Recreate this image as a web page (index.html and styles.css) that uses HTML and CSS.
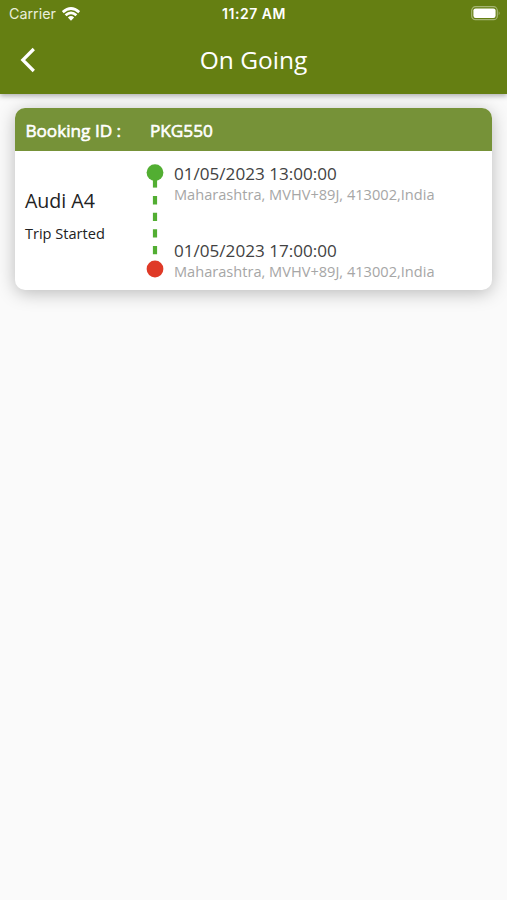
FILE: index.html
```
<!DOCTYPE html>
<html lang="en">
<head>
<meta charset="utf-8">
<title>On Going</title>
<link rel="stylesheet" href="styles.css">
</head>
<body>
<header class="header">
  <div class="status">
    <div class="carrier"><span>Carrier</span>
      <svg class="wifi" width="18" height="14" viewBox="0 0 18 14" fill="none" stroke="#fff" stroke-width="2.8"><path d="M.8 5.1Q9-2 17.2 5.1M3.6 8.3Q9 3.4 14.4 8.3"/><path d="M5.9 10.4Q9 7.8 12.1 10.4L9 13.7Z" fill="#fff" stroke="none"/></svg>
    </div>
    <span class="time">11:27 AM</span>
    <svg class="battery" width="30" height="15" viewBox="0 0 30 15"><rect x=".7" y=".7" width="25.6" height="13" rx="3.8" fill="none" stroke="#a5b573" stroke-width="1.2"/><rect x="2.4" y="2.4" width="22.2" height="9.6" rx="2.2" fill="#fff"/><path d="M27.7 5.2Q29.6 7.2 27.7 9.2Z" fill="#a5b573"/></svg>
  </div>
  <div class="bar">
    <svg class="back" width="16" height="26" viewBox="0 0 16 26" fill="none" stroke="#fff" stroke-width="3.2"><path d="M13.8 2L2.8 13L13.8 24"/></svg>
    <h1 class="title">On Going</h1>
    <span></span>
  </div>
</header>
<main class="content">
  <article class="card">
    <div class="card-head"><span>Booking ID :</span><span>PKG550</span></div>
    <div class="card-body">
      <div class="vehicle">
        <div class="name">Audi A4</div>
        <div class="state">Trip Started</div>
      </div>
      <svg class="route" width="18" height="115" viewBox="0 0 18 115"><path d="M9 24.8V104" stroke="#52ae32" stroke-width="4.2" stroke-dasharray="8.3" stroke-dashoffset="8.3"/><path d="M9 9.6V24.6" stroke="#52ae32" stroke-width="4.2"/><circle cx="9" cy="9.6" r="8.4" fill="#52ae32"/><circle cx="9" cy="106" r="8.4" fill="#df3a27"/></svg>
      <div class="stops">
        <div class="stop"><div class="date">01/05/2023 13:00:00</div><div class="place">Maharashtra, MVHV+89J, 413002,India</div></div>
        <div class="stop"><div class="date">01/05/2023 17:00:00</div><div class="place">Maharashtra, MVHV+89J, 413002,India</div></div>
      </div>
    </div>
  </article>
</main>
</body>
</html>
```
FILE: styles.css
```
* { box-sizing: border-box; }
body { margin: 0; min-height: 900px; background: #fafafa; font-family: "Open Sans", sans-serif; white-space: nowrap; }
.header { position: relative; height: 94px; background: #657f12; color: #fff; box-shadow: 0 2px 5px rgba(0,0,0,.3); }
.status { display: grid; grid-template-columns: 1fr auto 1fr; align-items: center; height: 27px; padding: 0 6px 0 9px; font-family: Inter, sans-serif; font-size: 14.3px; }
.carrier { display: flex; align-items: center; gap: 6px; color: #e9eedb; }
.time { margin-right: 2px; font-weight: 600; font-size: 14px; letter-spacing: .55px; }
.battery { justify-self: end; }
.bar { display: grid; grid-template-columns: 1fr auto 1fr; align-items: center; height: 66px; padding: 0 20px; }
.title { margin: 0; font-size: 24.5px; font-weight: 400; line-height: 34px; }
.content { padding: 14.4px 15px 0 15.4px; }
.card { height: 182px; border-radius: 10px; background: #fff; box-shadow: 0 3px 18px rgba(0,0,0,.26); }
.card-head { display: grid; grid-template-columns: 124.6px 1fr; align-items: center; height: 42.6px; padding: 1px 0 0 10px; border-radius: 10px 10px 0 0; background: #769238; color: #fff; font-size: 17.2px; -webkit-text-stroke: .6px #fff; }
.card-body { display: grid; grid-template-columns: 120.6px 18px 1fr; padding: 12.5px 0 0 9.5px; }
.vehicle { padding-top: 23.5px; color: #222; }
.name { font-size: 19.6px; line-height: 28px; }
.state { margin-top: 8px; font-size: 14.6px; line-height: 20px; }
.route { margin-left: .5px; }
.stops { display: grid; grid-template-rows: 77px 43px; padding-left: 10.5px; }
.date { color: #424242; font-size: 17.1px; line-height: 22px; }
.place { color: #a6a6a6; font-size: 14.6px; line-height: 18px; }
```
